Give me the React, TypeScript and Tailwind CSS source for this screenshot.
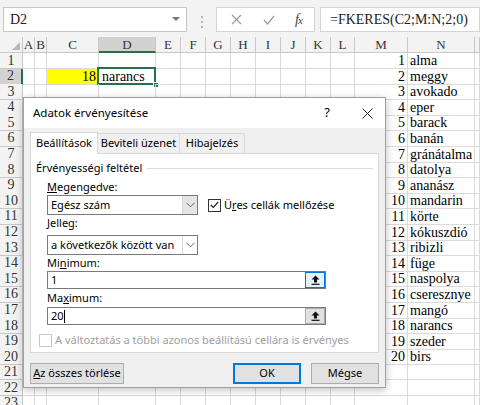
import React from 'react'

const cols = [
  { id: 'A', w: 12 },
  { id: 'B', w: 12 },
  { id: 'C', w: 52 },
  { id: 'D', w: 57 },
  { id: 'E', w: 25 },
  { id: 'F', w: 25 },
  { id: 'G', w: 25 },
  { id: 'H', w: 25 },
  { id: 'I', w: 25 },
  { id: 'J', w: 25 },
  { id: 'K', w: 25 },
  { id: 'L', w: 24 },
  { id: 'M', w: 53 },
  { id: 'N', w: 67 },
  { id: '', w: 0 },
]

const fruits = [
  'alma', 'meggy', 'avokado', 'eper', 'barack', 'banán', 'gránátalma', 'datolya', 'ananász', 'mandarin',
  'körte', 'kókuszdió', 'ribizli', 'füge', 'naspolya', 'cseresznye', 'mangó', 'narancs', 'szeder', 'birs',
]

const gridCols = 'grid grid-cols-[23px_12px_12px_52px_57px_25px_25px_25px_25px_25px_25px_25px_24px_53px_67px_1fr]'

function TopBar() {
  return (
    <div className="h-[37px] bg-[#f3f3f3] flex pl-[3px] pt-[7px]">
      <div className="w-[184px] h-[25px] bg-white border border-[#c6c6c6] flex items-center justify-between pl-[6px] pr-[6px]">
        <span className="text-[14px] text-[#222]">D2</span>
        <svg width="8" height="5" viewBox="0 0 8 5"><path d="M0 0 L8 0 L4 4 Z" fill="#777" /></svg>
      </div>
      <div className="w-[29px] flex flex-col items-center justify-center gap-[3px] pb-[1px]">
        <span className="w-[2px] h-[2px] bg-[#b5b5b5]" />
        <span className="w-[2px] h-[2px] bg-[#b5b5b5]" />
        <span className="w-[2px] h-[2px] bg-[#b5b5b5]" />
      </div>
      <div className="w-[99px] h-[25px] bg-white border border-[#d4d4d4] flex items-center">
        <svg className="ml-[14px]" width="11" height="11" viewBox="0 0 11 11"><path d="M1 1 L10 10 M10 1 L1 10" stroke="#9a9a9a" strokeWidth="1.2" /></svg>
        <svg className="ml-[21px]" width="12" height="10" viewBox="0 0 12 10"><path d="M1 5 L4.5 9 L11 1" stroke="#9a9a9a" strokeWidth="1.2" fill="none" /></svg>
        <span className="ml-[20px] italic text-[14px] text-[#444] tracking-[-1px]">f<span className="text-[11px]">x</span></span>
      </div>
      <div className="ml-[5px] flex-1 h-[25px] bg-white border border-[#d4d4d4] flex items-center pl-[9px]">
        <span className="text-[14px] text-[#222]">=FKERES(C2;M:N;2;0)</span>
      </div>
    </div>
  )
}

function HeaderRow() {
  return (
    <div className={`${gridCols} h-[16px] bg-[#f3f3f3]`}>
      <div className="relative border-r border-b border-[#c8c8c8]">
        <svg className="absolute right-[2px] bottom-[2px]" width="8" height="8" viewBox="0 0 8 8"><path d="M8 0 L8 8 L0 8 Z" fill="#b8b8b8" /></svg>
      </div>
      {cols.map((c, i) => (
        <div
          key={i}
          className={`flex items-center justify-center text-[13px] leading-none border-r ${c.id === 'D' ? 'bg-[#d2d2d2] border-b-2 border-b-[#217346] border-r-[#c8c8c8]' : 'border-b border-[#c8c8c8]'} text-[#333]`}
        >
          {c.id}
        </div>
      ))}
    </div>
  )
}

function Row({ n }: { n: number }) {
  const fruit = n <= 20 ? fruits[n - 1] : ''
  return (
    <div className={`${gridCols} h-[15.6px]`}>
      <div
        className={`flex items-center justify-center text-[14px] leading-none border-b ${n === 2 ? 'bg-[#d2d2d2] border-r-2 border-r-[#217346] border-b-[#c8c8c8]' : 'bg-[#f3f3f3] border-r border-[#c8c8c8]'} text-[#333]`}
      >
        {n}
      </div>
      {cols.map((c, i) => {
        let content: React.ReactNode = null
        let cls = 'border-r border-b border-[#dadada] text-[14px] leading-[15px] text-black whitespace-nowrap overflow-visible relative'
        if (c.id === 'C' && n === 2) {
          cls += ' bg-[#ffff00] text-right pr-[2px]'
          content = '18'
        }
        if (c.id === 'D' && n === 2) {
          content = (
            <>
              <span className="pl-[3px]">narancs</span>
              <div className="absolute left-[-2px] top-[-2px] right-[-1px] bottom-[-1px] border-2 border-[#217346]" />
              <div className="absolute right-[-4px] bottom-[-4px] w-[6px] h-[6px] bg-[#217346] border border-white" />
            </>
          )
        }
        if (c.id === 'M' && fruit) {
          cls += ' text-right pr-[2px]'
          content = n
        }
        if (c.id === 'N' && fruit) {
          cls += ' pl-[2px]'
          content = fruit
        }
        return (
          <div key={i} className={cls}>
            {content}
          </div>
        )
      })}
    </div>
  )
}

function UpArrow() {
  return (
    <svg width="9" height="10" viewBox="0 0 9 10">
      <path d="M4.5 0.5 L8.5 4.5 L6 4.5 L6 7.5 L3 7.5 L3 4.5 L0.5 4.5 Z" fill="#111" />
      <path d="M0.5 9.3 L8.5 9.3" stroke="#111" strokeWidth="1.2" />
    </svg>
  )
}

function Chevron() {
  return (
    <svg width="9" height="6" viewBox="0 0 9 6"><path d="M0.5 0.8 L4.5 4.8 L8.5 0.8" stroke="#666" strokeWidth="1" fill="none" /></svg>
  )
}

function Select({ value, gray }: { value: string; gray?: boolean }) {
  return (
    <div className="w-[151px] h-[20px] bg-white border border-[#7a7a7a] flex items-center">
      <span className="flex-1 pl-[3px] whitespace-nowrap">{value}</span>
      <div className={`w-[15px] h-full flex items-center justify-center border-l border-[#d9d9d9] ${gray ? 'bg-[#e5e5e5]' : 'bg-white'}`}>
        <Chevron />
      </div>
    </div>
  )
}

function RangeInput({ value, focused, caret }: { value: string; focused?: boolean; caret?: boolean }) {
  return (
    <div className="w-[279px] h-[18px] bg-white border border-[#7a7a7a] flex items-center">
      <span className="flex-1 pl-[3px] flex items-center">
        {value}
        {caret && <span className="inline-block w-px h-[13px] bg-black" />}
      </span>
      <div className={`w-[20px] h-[16px] flex items-center justify-center border ${focused ? 'bg-[#e5f1fb] border-[#0078d7]' : 'bg-[#e1e1e1] border-[#adadad]'}`}>
        <UpArrow />
      </div>
    </div>
  )
}

function Dialog() {
  return (
    <div className="absolute left-[23px] top-[97px] w-[363px] h-[291px] bg-[#f0f0f0] border border-[#a0a0a0] shadow-[0_2px_8px_rgba(0,0,0,0.25)] flex flex-col font-['Noto_Sans',sans-serif] text-[11px] text-black whitespace-nowrap">
      <div className="h-[30px] bg-white flex items-center pl-[9px] shrink-0">
        <span className="flex-1 text-[11.5px]">Adatok érvényesítése</span>
        <span className="w-[14px] text-center text-[13px] mr-[28px]">?</span>
        <svg className="mr-[12px]" width="11" height="11" viewBox="0 0 11 11"><path d="M0.5 0.5 L10.5 10.5 M10.5 0.5 L0.5 10.5" stroke="#222" strokeWidth="1" /></svg>
      </div>
      <div className="flex items-end pl-[6px] pt-[3px] h-[25px] shrink-0">
        <div className="w-[68px] h-[22px] bg-white border border-[#d9d9d9] border-b-0 flex items-center justify-center relative z-10 mb-[-1px]">Beállítások</div>
        <div className="w-[82px] h-[20px] border border-[#d9d9d9] border-l-0 border-b-0 flex items-center justify-center">Beviteli üzenet</div>
        <div className="w-[65px] h-[20px] border border-[#d9d9d9] border-l-0 border-b-0 flex items-center justify-center">Hibajelzés</div>
      </div>
      <div className="mx-[6px] h-[200px] bg-white border border-[#d9d9d9] pl-[5px] pt-[6px] flex flex-col shrink-0">
        <div className="h-[16px] flex items-center">
          <span>Érvényességi feltétel</span>
          <div className="flex-1 h-px bg-[#dcdcdc] ml-[5px] mr-[5px]" />
        </div>
        <div className="pl-[11px] flex flex-col">
          <div className="h-[16px] mt-[3px] flex items-center"><span><u>M</u>egengedve:</span></div>
          <div className="flex items-center">
            <Select value="Egész szám" gray />
            <div className="ml-[10px] w-[13px] h-[13px] border border-[#333] bg-white flex items-center justify-center">
              <svg width="9" height="8" viewBox="0 0 9 8"><path d="M0.8 4 L3.3 6.5 L8.2 1" stroke="#222" strokeWidth="1.2" fill="none" /></svg>
            </div>
            <span className="ml-[3px]">Ü<u>r</u>es cellák mellőzése</span>
          </div>
          <div className="h-[16px] flex items-center"><span><u>J</u>elleg:</span></div>
          <div className="mt-[4px]"><Select value="a következők között van" /></div>
          <div className="h-[16px] flex items-center"><span>Mi<u>n</u>imum:</span></div>
          <RangeInput value="1" focused />
          <div className="h-[16px] mt-[1px] flex items-center"><span>Ma<u>x</u>imum:</span></div>
          <div className="mt-[1px]"><RangeInput value="20" caret /></div>
        </div>
        <div className="h-[16px] mt-[7px] pl-[3px] flex items-center text-[#a0a0a0]">
          <div className="w-[13px] h-[13px] border border-[#c8c8c8] bg-white" />
          <span className="ml-[3px]">A változtatás a többi azonos beállítású cellára is érvényes</span>
        </div>
      </div>
      <div className="flex mt-[10px] px-[6px]">
        <div className="w-[94px] h-[21px] bg-[#e1e1e1] border border-[#adadad] flex items-center justify-center"><span><u>A</u>z összes törlése</span></div>
        <div className="ml-auto w-[68px] h-[21px] bg-[#e1e1e1] border-2 border-[#0078d7] flex items-center justify-center">OK</div>
        <div className="ml-[10px] w-[68px] h-[21px] bg-[#e1e1e1] border border-[#adadad] flex items-center justify-center">Mégse</div>
      </div>
    </div>
  )
}

export default function App() {
  const rows = Array.from({ length: 23 }, (_, i) => i + 1)
  return (
    <div className="relative w-[480px] h-[405px] overflow-hidden bg-white font-['Liberation_Serif',serif]">
      <TopBar />
      <HeaderRow />
      {rows.map(n => <Row key={n} n={n} />)}
      <Dialog />
    </div>
  )
}
